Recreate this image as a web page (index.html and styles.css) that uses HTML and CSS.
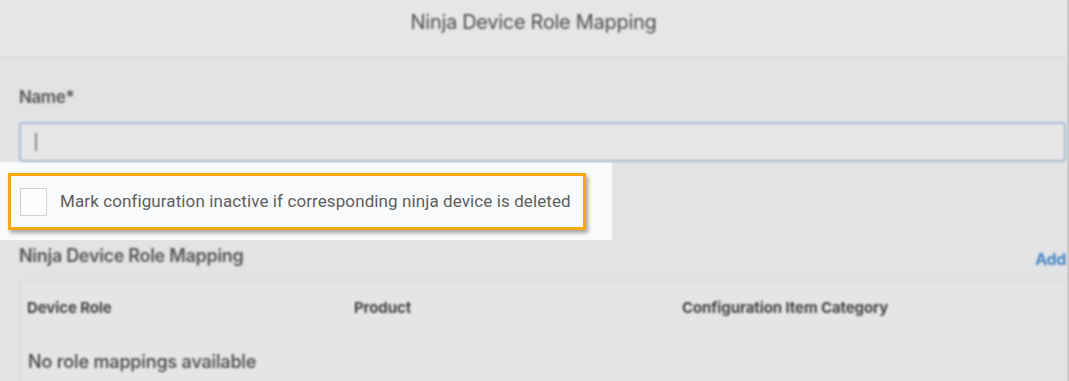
FILE: index.html
```html
<!DOCTYPE html>
<html>
<head>
<meta charset="utf-8">
<link rel="stylesheet" href="styles.css">
</head>
<body>
<div class="page">
  <div class="blurred">
    <header class="header">Ninja Device Role Mapping</header>
    <div class="content top">
      <div class="label">Name*</div>
      <div class="input"><span class="caret"></span></div>
    </div>
  </div>
  <div class="highlight">
    <div class="callout">
      <span class="checkbox"></span>
      <span class="callout-text">Mark configuration inactive if corresponding ninja device is deleted</span>
    </div>
  </div>
  <div class="blurred">
    <div class="content bottom">
      <div class="section-head">
        <span class="section-title">Ninja Device Role Mapping</span>
        <span class="add">Add</span>
      </div>
      <div class="table">
        <div class="thead">
          <span class="col c1">Device Role</span>
          <span class="col c2">Product</span>
          <span class="col c3">Configuration Item Category</span>
        </div>
        <div class="empty">No role mappings available</div>
      </div>
    </div>
  </div>
</div>
</body>
</html>
```

FILE: styles.css
```css
html, body {
  margin: 0;
  padding: 0;
  background: #e2e3e4;
  overflow: hidden;
}
body {
  width: 1069px;
  height: 381px;
  font-family: Inter, "Noto Sans", sans-serif;
  color: #555;
}
.page {
  width: 1067px;
  height: 381px;
  border-right: 2px solid #c9c9c9;
  background: #e2e3e4;
  overflow: hidden;
}
.blurred {
  filter: blur(0.9px);
}
.header {
  height: 58px;
  box-sizing: border-box;
  background: #e6e6e6;
  border-bottom: 2px solid #d9dadb;
  display: flex;
  justify-content: center;
  align-items: flex-start;
  padding-top: 10px;
  font-size: 20px;
  line-height: 24px;
  letter-spacing: -0.3px;
  color: #4e4e4e;
}
.content {
  padding: 0 1px 0 19px;
}
.top {
  padding-top: 28px;
}
.label {
  font-size: 17px;
  font-weight: 600;
  letter-spacing: -0.4px;
  color: #555;
  height: 22px;
  line-height: 22px;
}
.input {
  margin-top: 14px;
  height: 40px;
  box-sizing: border-box;
  border: 2px solid #a9bdd5;
  border-radius: 4px;
  background: #e6e6e6;
  display: flex;
  align-items: center;
  padding-left: 14px;
}
.caret {
  width: 2px;
  height: 18px;
  background: #8a8a8a;
}
.highlight {
  width: 612px;
  height: 78px;
  background: #f9fafb;
  padding: 11px 0 0 8px;
  box-sizing: border-box;
}
.callout {
  width: 578px;
  height: 57px;
  box-sizing: border-box;
  border: 3px solid #f5a90c;
  box-shadow: 2px 3px 4px rgba(0, 0, 0, 0.35);
  display: flex;
  align-items: center;
  padding-left: 9px;
  gap: 13px;
}
.checkbox {
  width: 25px;
  height: 26px;
  border: 1px solid #d4cfcc;
  background: #fdfdfd;
  flex: none;
}
.callout-text {
  font-family: Roboto, "Noto Sans", sans-serif;
  font-size: 17px;
  color: #5e5e5e;
  letter-spacing: 0.1px;
  margin-bottom: 1px;
}
.bottom {
  padding-top: 3px;
}
.section-head {
  display: flex;
  justify-content: space-between;
  align-items: center;
  height: 26px;
}
.section-title {
  font-size: 18px;
  font-weight: 600;
  letter-spacing: -0.3px;
  color: #555;
  line-height: 22px;
}
.add {
  font-size: 16px;
  font-weight: 700;
  color: #4a87c6;
  letter-spacing: -0.3px;
  margin-right: 0px;
  margin-top: 6px;
}
.table {
  margin-top: 11px;
  height: 120px;
  border: 1px solid #d6d7d8;
  border-radius: 4px;
  background: #e5e5e5;
  margin-left: 1px;
  margin-right: 1px;
}
.thead {
  display: flex;
  height: 52px;
  align-items: center;
  font-size: 15px;
  font-weight: 700;
  letter-spacing: -0.1px;
  color: #444;
  padding-left: 6px;
}
.c1 { width: 327px; }
.c2 { width: 328px; }
.empty {
  padding-left: 7px;
  margin-top: 18px;
  font-size: 18px;
  font-weight: 500;
  letter-spacing: -0.15px;
  color: #444;
}
```
